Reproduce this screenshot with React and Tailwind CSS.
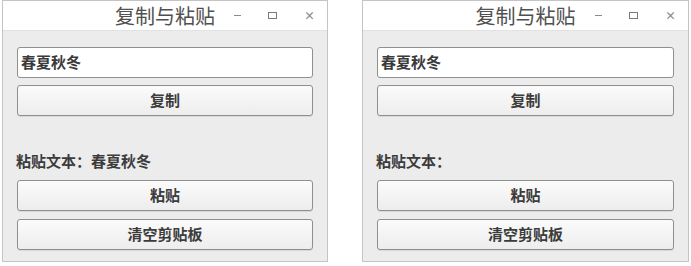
import React from "react";

const font = { fontFamily: '"Noto Sans CJK SC", "Noto Sans", sans-serif' };

function Btn({ children }) {
  return (
    <div className="h-[31px] rounded-[3px] border border-[#8f8f8f] bg-gradient-to-b from-[#fbfbfb] to-[#ededed] flex items-center justify-center text-[15px] font-bold text-[#3c3c3c] shadow-[0_1px_0_#d8d8d8]">
      {children}
    </div>
  );
}

function Window({ label, w }) {
  return (
    <div className={`${w} h-[262px] border border-[#c4c4c4] flex flex-col bg-[#ececec]`}>
      <div className="relative h-[30px] bg-white flex items-center justify-center border-b border-[#e2e2e2]">
        <span className="text-[20px] text-[#505050] leading-none">复制与粘贴</span>
        <div className="absolute right-[12px] top-0 h-full flex items-center gap-[27px] text-[#8a8a8a]">
          <span className="block w-[7px] h-[1px] bg-[#8a8a8a]" />
          <span className="block w-[9px] h-[7px] border border-[#7a7a7a]" />
          <span className="text-[11px] leading-none font-bold">×</span>
        </div>
      </div>
      <div className="flex-1 flex flex-col pl-[14px] pr-[14px] pt-[16px]">
        <div className="h-[31px] rounded-[3px] border border-[#8f8f8f] bg-white flex items-center px-[3px] text-[15px] font-bold text-[#3a3a3a]">
          春夏秋冬
        </div>
        <div className="mt-[7px]">
          <Btn>复制</Btn>
        </div>
        <div className="mt-[35px] h-[20px] flex items-center text-[15px] font-bold text-[#3c3c3c] -ml-[1px]">
          {label}
        </div>
        <div className="mt-[9px]">
          <Btn>粘贴</Btn>
        </div>
        <div className="mt-[8px]">
          <Btn>清空剪贴板</Btn>
        </div>
      </div>
    </div>
  );
}

export default function App() {
  return (
    <div className="w-[691px] h-[266px] bg-white flex items-start pl-[2px] gap-[34px]" style={font}>
      <Window w="w-[326px]" label="粘贴文本：春夏秋冬" />
      <Window w="w-[327px]" label="粘贴文本：" />
    </div>
  );
}
